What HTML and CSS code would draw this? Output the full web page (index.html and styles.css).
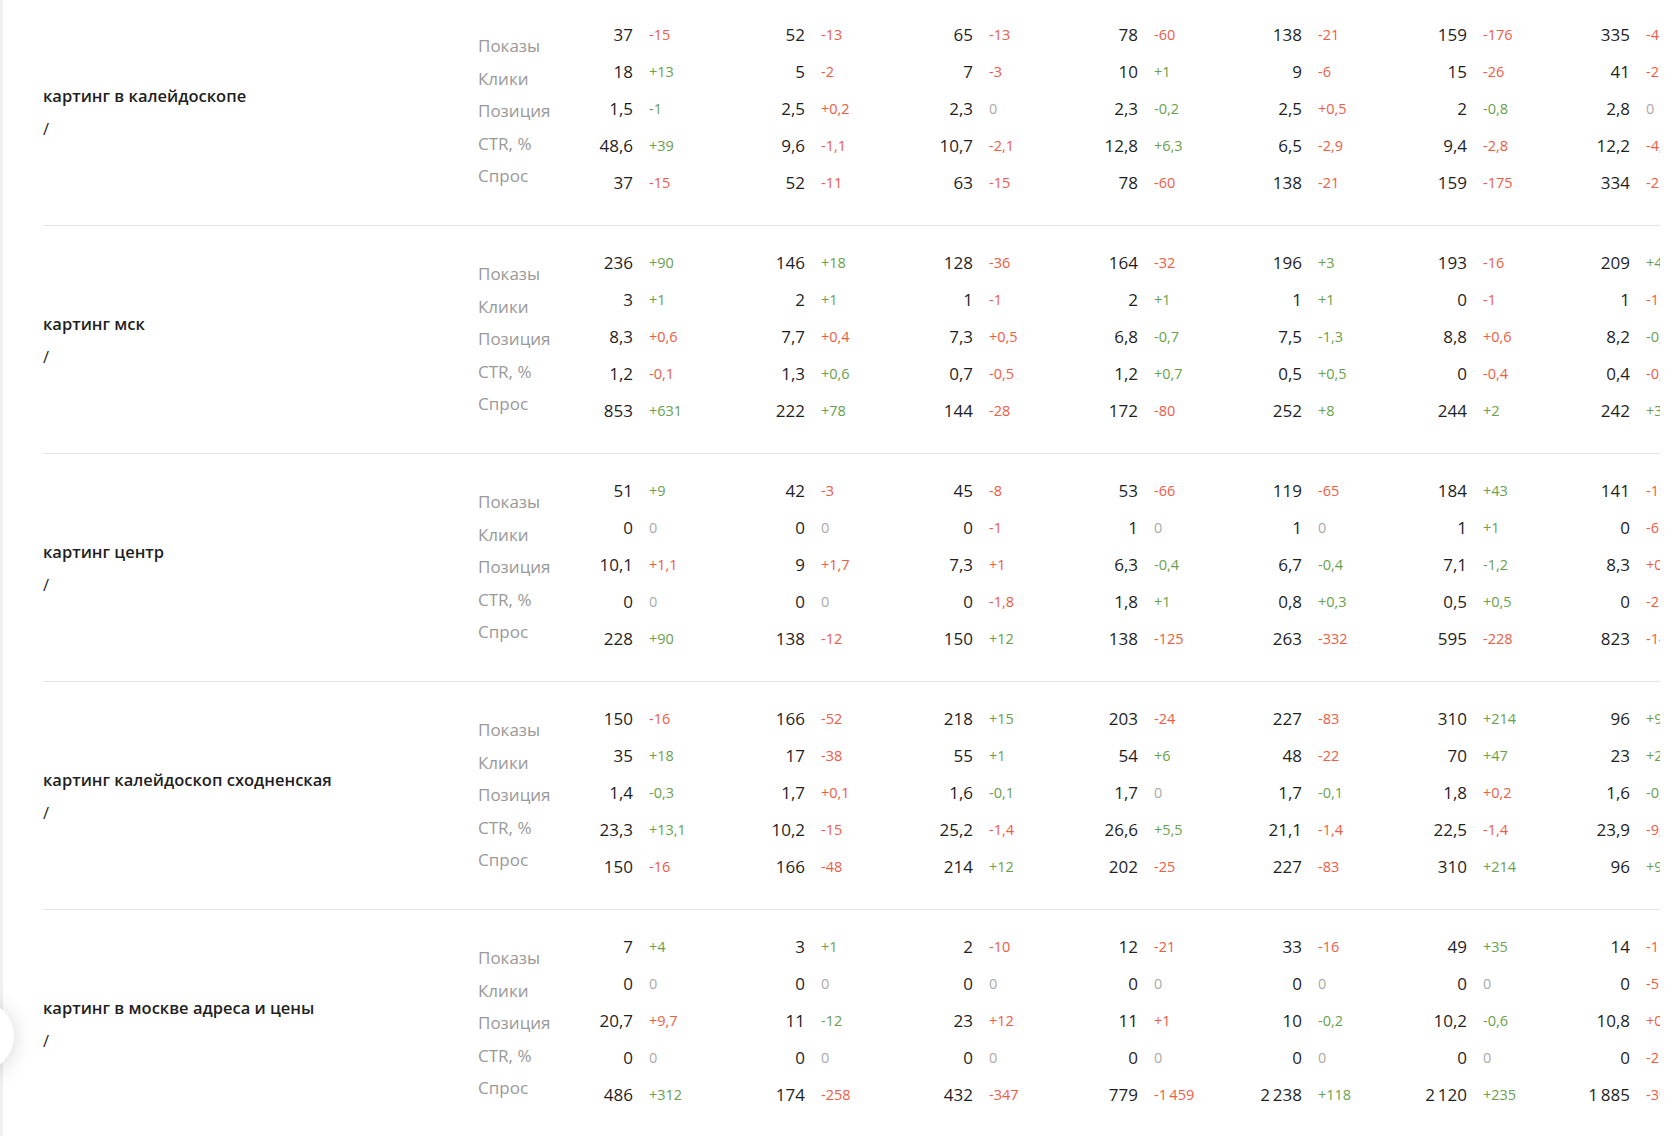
FILE: index.html
```html
<!DOCTYPE html>
<html lang="ru">
<head>
<meta charset="utf-8">
<title>Запросы</title>
<link rel="stylesheet" href="styles.css">
</head>
<body>
<div class="page">
  <div class="list">

    <div class="row">
      <div class="title"><div class="name">картинг в калейдоскопе</div><div class="path">/</div></div>
      <div class="labels"><div>Показы</div><div>Клики</div><div>Позиция</div><div>CTR, %</div><div>Спрос</div></div>
      <div class="data">
        <span class="v">37</span><span class="d r">-15</span><span class="v">52</span><span class="d r">-13</span><span class="v">65</span><span class="d r">-13</span><span class="v">78</span><span class="d r">-60</span><span class="v">138</span><span class="d r">-21</span><span class="v">159</span><span class="d r">-176</span><span class="v">335</span><span class="d r">-41</span>
        <span class="v">18</span><span class="d g">+13</span><span class="v">5</span><span class="d r">-2</span><span class="v">7</span><span class="d r">-3</span><span class="v">10</span><span class="d g">+1</span><span class="v">9</span><span class="d r">-6</span><span class="v">15</span><span class="d r">-26</span><span class="v">41</span><span class="d r">-27</span>
        <span class="v">1,5</span><span class="d g">-1</span><span class="v">2,5</span><span class="d r">+0,2</span><span class="v">2,3</span><span class="d z">0</span><span class="v">2,3</span><span class="d g">-0,2</span><span class="v">2,5</span><span class="d r">+0,5</span><span class="v">2</span><span class="d g">-0,8</span><span class="v">2,8</span><span class="d z">0</span>
        <span class="v">48,6</span><span class="d g">+39</span><span class="v">9,6</span><span class="d r">-1,1</span><span class="v">10,7</span><span class="d r">-2,1</span><span class="v">12,8</span><span class="d g">+6,3</span><span class="v">6,5</span><span class="d r">-2,9</span><span class="v">9,4</span><span class="d r">-2,8</span><span class="v">12,2</span><span class="d r">-4,1</span>
        <span class="v">37</span><span class="d r">-15</span><span class="v">52</span><span class="d r">-11</span><span class="v">63</span><span class="d r">-15</span><span class="v">78</span><span class="d r">-60</span><span class="v">138</span><span class="d r">-21</span><span class="v">159</span><span class="d r">-175</span><span class="v">334</span><span class="d r">-25</span>
      </div>
    </div>

    <div class="row">
      <div class="title"><div class="name">картинг мск</div><div class="path">/</div></div>
      <div class="labels"><div>Показы</div><div>Клики</div><div>Позиция</div><div>CTR, %</div><div>Спрос</div></div>
      <div class="data">
        <span class="v">236</span><span class="d g">+90</span><span class="v">146</span><span class="d g">+18</span><span class="v">128</span><span class="d r">-36</span><span class="v">164</span><span class="d r">-32</span><span class="v">196</span><span class="d g">+3</span><span class="v">193</span><span class="d r">-16</span><span class="v">209</span><span class="d g">+44</span>
        <span class="v">3</span><span class="d g">+1</span><span class="v">2</span><span class="d g">+1</span><span class="v">1</span><span class="d r">-1</span><span class="v">2</span><span class="d g">+1</span><span class="v">1</span><span class="d g">+1</span><span class="v">0</span><span class="d r">-1</span><span class="v">1</span><span class="d r">-1</span>
        <span class="v">8,3</span><span class="d r">+0,6</span><span class="v">7,7</span><span class="d r">+0,4</span><span class="v">7,3</span><span class="d r">+0,5</span><span class="v">6,8</span><span class="d g">-0,7</span><span class="v">7,5</span><span class="d g">-1,3</span><span class="v">8,8</span><span class="d r">+0,6</span><span class="v">8,2</span><span class="d g">-0,3</span>
        <span class="v">1,2</span><span class="d r">-0,1</span><span class="v">1,3</span><span class="d g">+0,6</span><span class="v">0,7</span><span class="d r">-0,5</span><span class="v">1,2</span><span class="d g">+0,7</span><span class="v">0,5</span><span class="d g">+0,5</span><span class="v">0</span><span class="d r">-0,4</span><span class="v">0,4</span><span class="d r">-0,2</span>
        <span class="v">853</span><span class="d g">+631</span><span class="v">222</span><span class="d g">+78</span><span class="v">144</span><span class="d r">-28</span><span class="v">172</span><span class="d r">-80</span><span class="v">252</span><span class="d g">+8</span><span class="v">244</span><span class="d g">+2</span><span class="v">242</span><span class="d g">+35</span>
      </div>
    </div>

    <div class="row">
      <div class="title"><div class="name">картинг центр</div><div class="path">/</div></div>
      <div class="labels"><div>Показы</div><div>Клики</div><div>Позиция</div><div>CTR, %</div><div>Спрос</div></div>
      <div class="data">
        <span class="v">51</span><span class="d g">+9</span><span class="v">42</span><span class="d r">-3</span><span class="v">45</span><span class="d r">-8</span><span class="v">53</span><span class="d r">-66</span><span class="v">119</span><span class="d r">-65</span><span class="v">184</span><span class="d g">+43</span><span class="v">141</span><span class="d r">-15</span>
        <span class="v">0</span><span class="d z">0</span><span class="v">0</span><span class="d z">0</span><span class="v">0</span><span class="d r">-1</span><span class="v">1</span><span class="d z">0</span><span class="v">1</span><span class="d z">0</span><span class="v">1</span><span class="d g">+1</span><span class="v">0</span><span class="d r">-6</span>
        <span class="v">10,1</span><span class="d r">+1,1</span><span class="v">9</span><span class="d r">+1,7</span><span class="v">7,3</span><span class="d r">+1</span><span class="v">6,3</span><span class="d g">-0,4</span><span class="v">6,7</span><span class="d g">-0,4</span><span class="v">7,1</span><span class="d g">-1,2</span><span class="v">8,3</span><span class="d r">+0,9</span>
        <span class="v">0</span><span class="d z">0</span><span class="v">0</span><span class="d z">0</span><span class="v">0</span><span class="d r">-1,8</span><span class="v">1,8</span><span class="d g">+1</span><span class="v">0,8</span><span class="d g">+0,3</span><span class="v">0,5</span><span class="d g">+0,5</span><span class="v">0</span><span class="d r">-2</span>
        <span class="v">228</span><span class="d g">+90</span><span class="v">138</span><span class="d r">-12</span><span class="v">150</span><span class="d g">+12</span><span class="v">138</span><span class="d r">-125</span><span class="v">263</span><span class="d r">-332</span><span class="v">595</span><span class="d r">-228</span><span class="v">823</span><span class="d r">-140</span>
      </div>
    </div>

    <div class="row">
      <div class="title"><div class="name">картинг калейдоскоп сходненская</div><div class="path">/</div></div>
      <div class="labels"><div>Показы</div><div>Клики</div><div>Позиция</div><div>CTR, %</div><div>Спрос</div></div>
      <div class="data">
        <span class="v">150</span><span class="d r">-16</span><span class="v">166</span><span class="d r">-52</span><span class="v">218</span><span class="d g">+15</span><span class="v">203</span><span class="d r">-24</span><span class="v">227</span><span class="d r">-83</span><span class="v">310</span><span class="d g">+214</span><span class="v">96</span><span class="d g">+91</span>
        <span class="v">35</span><span class="d g">+18</span><span class="v">17</span><span class="d r">-38</span><span class="v">55</span><span class="d g">+1</span><span class="v">54</span><span class="d g">+6</span><span class="v">48</span><span class="d r">-22</span><span class="v">70</span><span class="d g">+47</span><span class="v">23</span><span class="d g">+20</span>
        <span class="v">1,4</span><span class="d g">-0,3</span><span class="v">1,7</span><span class="d r">+0,1</span><span class="v">1,6</span><span class="d g">-0,1</span><span class="v">1,7</span><span class="d z">0</span><span class="v">1,7</span><span class="d g">-0,1</span><span class="v">1,8</span><span class="d r">+0,2</span><span class="v">1,6</span><span class="d g">-0,2</span>
        <span class="v">23,3</span><span class="d g">+13,1</span><span class="v">10,2</span><span class="d r">-15</span><span class="v">25,2</span><span class="d r">-1,4</span><span class="v">26,6</span><span class="d g">+5,5</span><span class="v">21,1</span><span class="d r">-1,4</span><span class="v">22,5</span><span class="d r">-1,4</span><span class="v">23,9</span><span class="d r">-9,6</span>
        <span class="v">150</span><span class="d r">-16</span><span class="v">166</span><span class="d r">-48</span><span class="v">214</span><span class="d g">+12</span><span class="v">202</span><span class="d r">-25</span><span class="v">227</span><span class="d r">-83</span><span class="v">310</span><span class="d g">+214</span><span class="v">96</span><span class="d g">+91</span>
      </div>
    </div>

    <div class="row">
      <div class="title"><div class="name">картинг в москве адреса и цены</div><div class="path">/</div></div>
      <div class="labels"><div>Показы</div><div>Клики</div><div>Позиция</div><div>CTR, %</div><div>Спрос</div></div>
      <div class="data">
        <span class="v">7</span><span class="d g">+4</span><span class="v">3</span><span class="d g">+1</span><span class="v">2</span><span class="d r">-10</span><span class="v">12</span><span class="d r">-21</span><span class="v">33</span><span class="d r">-16</span><span class="v">49</span><span class="d g">+35</span><span class="v">14</span><span class="d r">-11</span>
        <span class="v">0</span><span class="d z">0</span><span class="v">0</span><span class="d z">0</span><span class="v">0</span><span class="d z">0</span><span class="v">0</span><span class="d z">0</span><span class="v">0</span><span class="d z">0</span><span class="v">0</span><span class="d z">0</span><span class="v">0</span><span class="d r">-5</span>
        <span class="v">20,7</span><span class="d r">+9,7</span><span class="v">11</span><span class="d g">-12</span><span class="v">23</span><span class="d r">+12</span><span class="v">11</span><span class="d r">+1</span><span class="v">10</span><span class="d g">-0,2</span><span class="v">10,2</span><span class="d g">-0,6</span><span class="v">10,8</span><span class="d r">+0,5</span>
        <span class="v">0</span><span class="d z">0</span><span class="v">0</span><span class="d z">0</span><span class="v">0</span><span class="d z">0</span><span class="v">0</span><span class="d z">0</span><span class="v">0</span><span class="d z">0</span><span class="v">0</span><span class="d z">0</span><span class="v">0</span><span class="d r">-2</span>
        <span class="v">486</span><span class="d g">+312</span><span class="v">174</span><span class="d r">-258</span><span class="v">432</span><span class="d r">-347</span><span class="v">779</span><span class="d r">-1&thinsp;459</span><span class="v">2&thinsp;238</span><span class="d g">+118</span><span class="v">2&thinsp;120</span><span class="d g">+235</span><span class="v">1&thinsp;885</span><span class="d r">-398</span>
      </div>
    </div>

  </div>
  <button class="fab" type="button" aria-label="Меню"></button>
</div>
</body>
</html>
```

FILE: styles.css
```css
* { box-sizing: border-box; }

html, body {
  margin: 0;
  padding: 0;
  background: #fff;
}

body {
  font-family: "Open Sans", "Noto Sans", sans-serif;
  color: #222;
  width: 1680px;
  height: 1136px;
  overflow: hidden;
}

.page {
  border-left: 3px solid #f1f1f1;
  height: 1136px;
  overflow: hidden;
}

.list {
  margin: -2px 20px 0 40px;
  overflow: hidden;
}

.row {
  display: flex;
  height: 228px;
  border-bottom: 1px solid #e3e3e3;
  overflow: hidden;
}

.title {
  width: 435px;
  flex: none;
  align-self: center;
  font-size: 16.5px;
  line-height: 33px;
  color: #1f1f1f;
}

.name {
  font-weight: 600;
}

.path {
  font-weight: 400;
}

.labels {
  width: 95px;
  flex: none;
  padding-top: 32px;
  font-size: 17px;
  line-height: 32.5px;
  color: #999;
}

.data {
  flex: none;
  display: grid;
  grid-template-columns: 60px 112px 60px 108px 60px 105px 60px 104px 60px 105px 60px 103px 60px 100px;
  grid-auto-rows: 37px;
  padding-top: 18px;
  line-height: 37px;
  white-space: nowrap;
}

.v {
  text-align: right;
  font-size: 17px;
  color: #1f1f1f;
}

.d {
  padding-left: 16px;
  font-size: 14.5px;
}

.r { color: #ef5c45; }
.g { color: #6a9f4c; }
.z { color: #aaa; }

.fab {
  position: fixed;
  left: -58px;
  top: 1000px;
  width: 72px;
  height: 72px;
  border: 0;
  border-radius: 50%;
  background: #fff;
  box-shadow: 0 2px 22px rgba(0, 0, 0, 0.16);
  padding: 0;
}
```
